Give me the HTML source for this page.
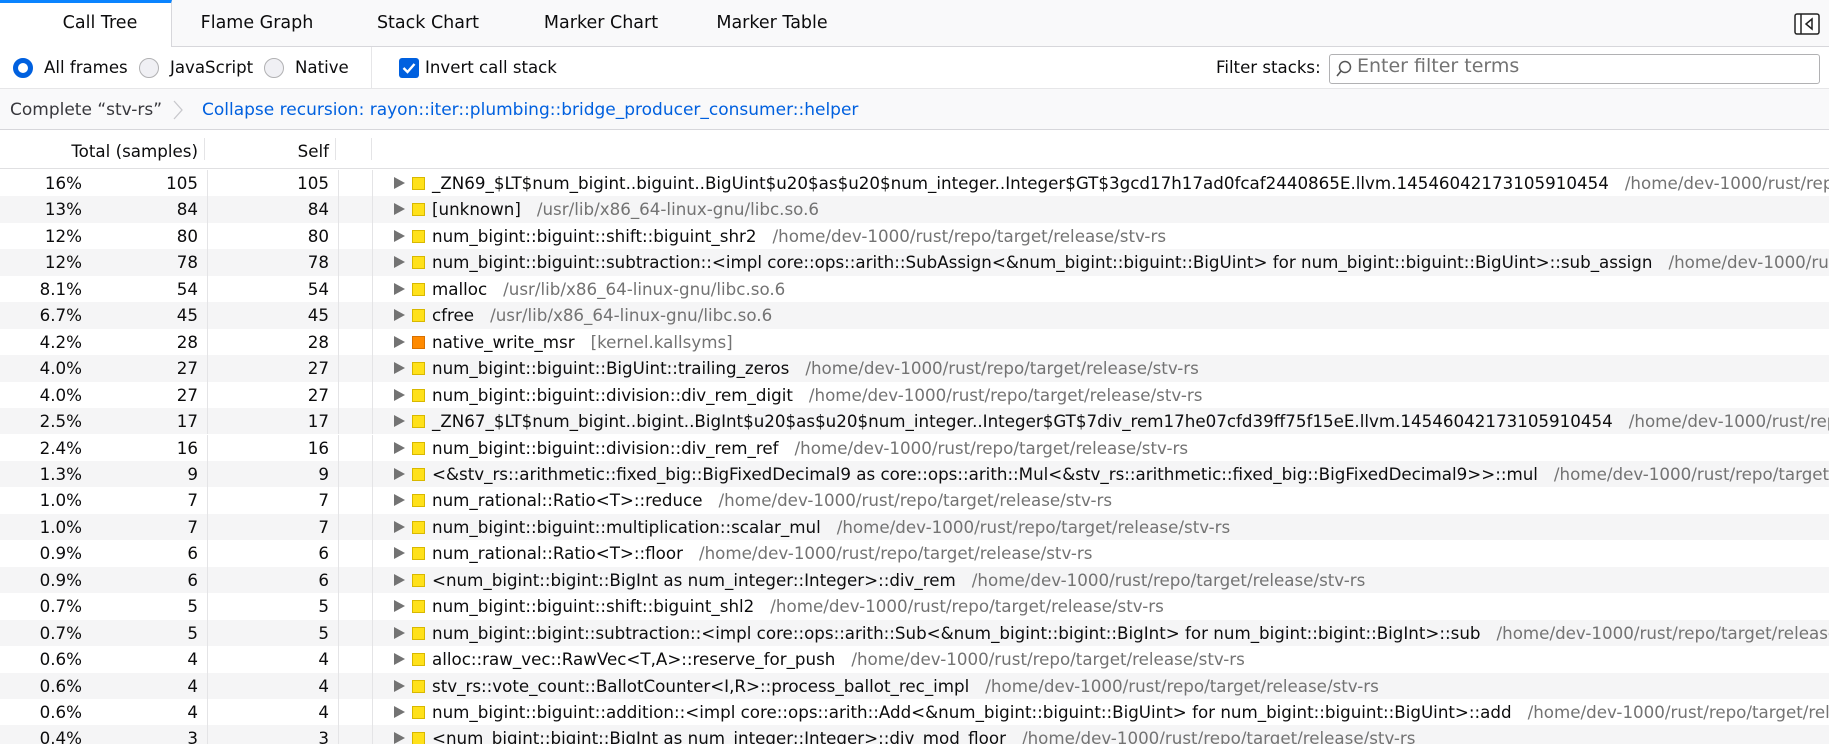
<!DOCTYPE html>
<html><head><meta charset="utf-8"><style>
*{box-sizing:border-box;margin:0;padding:0}
body{width:1829px;height:744px;overflow:hidden;background:#fff;font-family:"DejaVu Sans",sans-serif;color:#0c0c0d;position:relative}
.abs{position:absolute;white-space:nowrap}
#tabs{position:absolute;left:0;top:0;width:1829px;height:47px;background:#f9f9fa;border-bottom:1px solid #d7d7db}
.tab{position:absolute;top:0;height:47px;line-height:47px;font-size:17.5px;text-align:center;transform:translateX(-50%)}
#sel{position:absolute;left:0;top:0;width:172px;height:48px;background:#fff;border-top:3px solid #0a84ff;border-right:1px solid #d7d7db}
#tool{position:absolute;left:0;top:47px;width:1829px;height:42px;background:#fff;border-bottom:1px solid #e6e6e8;font-size:16.6px}
#bc{position:absolute;left:0;top:89px;width:1829px;height:41px;background:#f9f9fa;border-bottom:1px solid #d7d7db;font-size:17px}
#hdr{position:absolute;left:0;top:130px;width:1829px;height:39px;border-bottom:1px solid #e0e0e2;font-size:16.7px}
.row{position:absolute;left:0;width:1829px;height:26.45px;font-size:16.7px;line-height:26px;overflow:hidden}
.row:nth-child(even){background:#f5f5f6}
.r{position:absolute;text-align:right}
.vl{position:absolute;top:0;bottom:0;width:1px;background:#e4e4e6}
.tg{position:absolute;left:394px;top:7px;width:0;height:0;border-left:11px solid #737373;border-top:6px solid transparent;border-bottom:6px solid transparent}
.sq{position:absolute;left:412px;top:7px;width:13px;height:13px;background:#ffe11a;border:1px solid #d8b800}
.sq.o{background:#ff8a00;border-color:#d87000}
.nm{position:absolute;left:432px;white-space:nowrap}
.p{color:#737373;margin-left:16px}
</style></head><body>
<div id="tabs">
<div id="sel"></div>
<div class="tab" style="left:100px">Call Tree</div>
<div class="tab" style="left:257px">Flame Graph</div>
<div class="tab" style="left:428px">Stack Chart</div>
<div class="tab" style="left:601px">Marker Chart</div>
<div class="tab" style="left:772px">Marker Table</div>
<svg class="abs" style="left:1794px;top:13px" width="26" height="22" viewBox="0 0 26 22"><rect x="1" y="1" width="24" height="20" rx="2" fill="#fff" stroke="#222" stroke-width="1.5"/><line x1="7" y1="1" x2="7" y2="21" stroke="#222" stroke-width="1.5"/><path d="M18 6 L12 11 L18 16 Z" fill="none" stroke="#222" stroke-width="1.5"/></svg>
</div>
<div id="tool">
<div class="abs" style="left:13px;top:11px;width:20px;height:20px;border-radius:50%;border:5px solid #0060df;background:#fff"></div>
<div class="abs" style="left:44px;top:11px">All frames</div>
<div class="abs" style="left:139px;top:11px;width:20px;height:20px;border-radius:50%;border:1px solid #b1b1b3;background:#f0f0f4"></div>
<div class="abs" style="left:170px;top:11px">JavaScript</div>
<div class="abs" style="left:264px;top:11px;width:20px;height:20px;border-radius:50%;border:1px solid #b1b1b3;background:#f0f0f4"></div>
<div class="abs" style="left:295px;top:11px">Native</div>
<div class="abs" style="left:371px;top:0;width:1px;height:42px;background:#e6e6e8"></div>
<svg class="abs" style="left:399px;top:11px" width="20" height="20" viewBox="0 0 20 20"><rect width="20" height="20" rx="3" fill="#0060df"/><path d="M4.5 10 L8.5 14 L15.5 6" fill="none" stroke="#fff" stroke-width="2.4"/></svg>
<div class="abs" style="left:425px;top:11px">Invert call stack</div>
<div class="abs" style="left:1216px;top:11px">Filter stacks:</div>
<div class="abs" style="left:1329px;top:7px;width:491px;height:30px;border:1px solid #b1b1b3;border-radius:3px;background:#fff"></div>
<svg class="abs" style="left:1335px;top:13px" width="18" height="18" viewBox="0 0 18 18"><circle cx="10" cy="7" r="5.5" fill="none" stroke="#555" stroke-width="1.5"/><line x1="6" y1="11" x2="2" y2="16" stroke="#555" stroke-width="1.6"/></svg>
<div class="abs" style="left:1357px;top:8px;color:#737373;font-size:19px">Enter filter terms</div>
</div>
<div id="bc">
<div class="abs" style="left:10px;top:11px;color:#38383d">Complete “stv-rs”</div>
<svg class="abs" style="left:172px;top:10px" width="12" height="22" viewBox="0 0 12 22"><path d="M2 2 L10 11 L2 20" fill="none" stroke="#c8c8cc" stroke-width="1.3"/></svg>
<div class="abs" style="left:202px;top:11px;color:#0060df">Collapse recursion: rayon::iter::plumbing::bridge_producer_consumer::helper</div>
</div>
<div id="hdr">
<div class="r" style="right:1631px;top:11px">Total (samples)</div>
<div class="vl" style="left:204px;top:8px;bottom:8px"></div>
<div class="r" style="right:1500px;top:11px">Self</div>
<div class="vl" style="left:335px;top:8px;bottom:8px"></div>
<div class="vl" style="left:371px;top:8px;bottom:8px"></div>
</div>
<div id="rows" style="position:absolute;left:0;top:170px;width:1829px;height:574px;overflow:hidden">
</div>
<script>
var d=[
["16%","105","_ZN69_$LT$num_bigint..biguint..BigUint$u20$as$u20$num_integer..Integer$GT$3gcd17h17ad0fcaf2440865E.llvm.14546042173105910454","/home/dev-1000/rust/repo/target/release/stv-rs"],
["13%","84","[unknown]","/usr/lib/x86_64-linux-gnu/libc.so.6"],
["12%","80","num_bigint::biguint::shift::biguint_shr2","/home/dev-1000/rust/repo/target/release/stv-rs"],
["12%","78","num_bigint::biguint::subtraction::<impl core::ops::arith::SubAssign<&num_bigint::biguint::BigUint> for num_bigint::biguint::BigUint>::sub_assign","/home/dev-1000/rust/repo/target/release/stv-rs"],
["8.1%","54","malloc","/usr/lib/x86_64-linux-gnu/libc.so.6"],
["6.7%","45","cfree","/usr/lib/x86_64-linux-gnu/libc.so.6"],
["4.2%","28","native_write_msr","[kernel.kallsyms]",1],
["4.0%","27","num_bigint::biguint::BigUint::trailing_zeros","/home/dev-1000/rust/repo/target/release/stv-rs"],
["4.0%","27","num_bigint::biguint::division::div_rem_digit","/home/dev-1000/rust/repo/target/release/stv-rs"],
["2.5%","17","_ZN67_$LT$num_bigint..bigint..BigInt$u20$as$u20$num_integer..Integer$GT$7div_rem17he07cfd39ff75f15eE.llvm.14546042173105910454","/home/dev-1000/rust/repo/target/release/stv-rs"],
["2.4%","16","num_bigint::biguint::division::div_rem_ref","/home/dev-1000/rust/repo/target/release/stv-rs"],
["1.3%","9","<&stv_rs::arithmetic::fixed_big::BigFixedDecimal9 as core::ops::arith::Mul<&stv_rs::arithmetic::fixed_big::BigFixedDecimal9>>::mul","/home/dev-1000/rust/repo/target/release/stv-rs"],
["1.0%","7","num_rational::Ratio<T>::reduce","/home/dev-1000/rust/repo/target/release/stv-rs"],
["1.0%","7","num_bigint::biguint::multiplication::scalar_mul","/home/dev-1000/rust/repo/target/release/stv-rs"],
["0.9%","6","num_rational::Ratio<T>::floor","/home/dev-1000/rust/repo/target/release/stv-rs"],
["0.9%","6","<num_bigint::bigint::BigInt as num_integer::Integer>::div_rem","/home/dev-1000/rust/repo/target/release/stv-rs"],
["0.7%","5","num_bigint::biguint::shift::biguint_shl2","/home/dev-1000/rust/repo/target/release/stv-rs"],
["0.7%","5","num_bigint::bigint::subtraction::<impl core::ops::arith::Sub<&num_bigint::bigint::BigInt> for num_bigint::bigint::BigInt>::sub","/home/dev-1000/rust/repo/target/release/stv-rs"],
["0.6%","4","alloc::raw_vec::RawVec<T,A>::reserve_for_push","/home/dev-1000/rust/repo/target/release/stv-rs"],
["0.6%","4","stv_rs::vote_count::BallotCounter<I,R>::process_ballot_rec_impl","/home/dev-1000/rust/repo/target/release/stv-rs"],
["0.6%","4","num_bigint::biguint::addition::<impl core::ops::arith::Add<&num_bigint::biguint::BigUint> for num_bigint::biguint::BigUint>::add","/home/dev-1000/rust/repo/target/release/stv-rs"],
["0.4%","3","<num_bigint::bigint::BigInt as num_integer::Integer>::div_mod_floor","/home/dev-1000/rust/repo/target/release/stv-rs"]];
function e(s){return s.replace(/&/g,"&amp;").replace(/</g,"&lt;").replace(/>/g,"&gt;")}
var h="";d.forEach(function(r,i){h+='<div class="row" style="top:'+(i*26.45)+'px"><div class="r" style="right:1747px">'+r[0]+'</div><div class="r" style="right:1631px">'+r[1]+'</div><div class="vl" style="left:207px"></div><div class="r" style="right:1500px">'+r[1]+'</div><div class="vl" style="left:338px"></div><div class="vl" style="left:372px"></div><div class="tg"></div><div class="sq'+(r[4]?' o':'')+'"></div><div class="nm">'+e(r[2])+'<span class="p">'+e(r[3])+'</span></div></div>'});
document.getElementById("rows").innerHTML=h;
</script>
</body></html>
